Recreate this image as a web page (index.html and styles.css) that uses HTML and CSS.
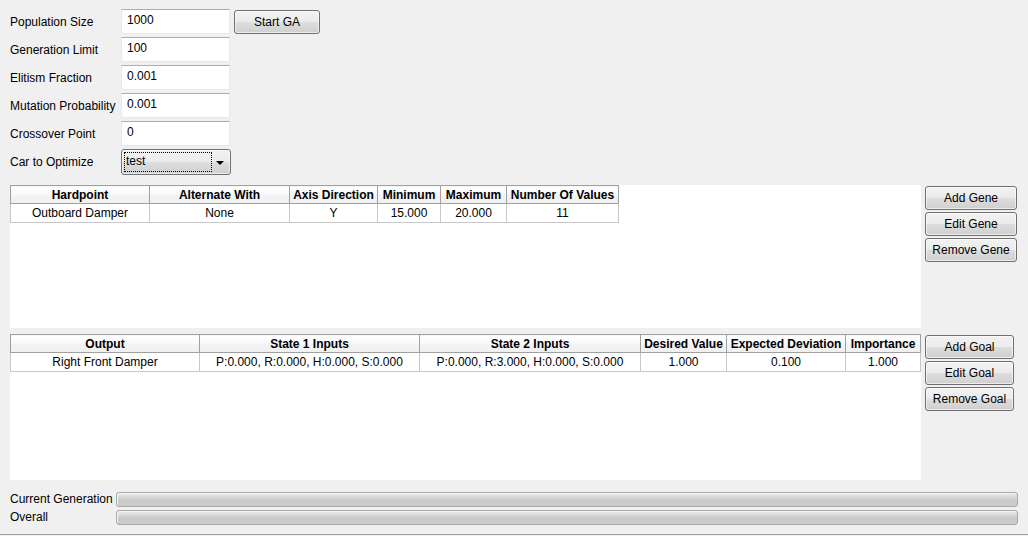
FILE: index.html
```html
<!DOCTYPE html>
<html>
<head>
<meta charset="utf-8">
<link rel="stylesheet" href="styles.css">
</head>
<body>
<div class="app">
  <div class="form">
    <div class="row">
      <span class="label">Population Size</span>
      <div class="input">1000</div>
      <button class="btn start">Start GA</button>
    </div>
    <div class="row"><span class="label">Generation Limit</span><div class="input">100</div></div>
    <div class="row"><span class="label">Elitism Fraction</span><div class="input">0.001</div></div>
    <div class="row"><span class="label">Mutation Probability</span><div class="input">0.001</div></div>
    <div class="row"><span class="label">Crossover Point</span><div class="input">0</div></div>
    <div class="row">
      <span class="label">Car to Optimize</span>
      <div class="combo">
        <div class="focus">test</div>
        <div class="arrow"></div>
      </div>
    </div>
  </div>

  <div class="section genes">
    <div class="panel">
      <table class="grid">
        <colgroup>
          <col style="width:139px"><col style="width:140px"><col style="width:88px">
          <col style="width:63px"><col style="width:66px"><col style="width:112px">
        </colgroup>
        <thead>
          <tr><th>Hardpoint</th><th>Alternate With</th><th>Axis Direction</th><th>Minimum</th><th>Maximum</th><th>Number Of Values</th></tr>
        </thead>
        <tbody>
          <tr><td>Outboard Damper</td><td>None</td><td>Y</td><td>15.000</td><td>20.000</td><td>11</td></tr>
        </tbody>
      </table>
    </div>
    <div class="buttons gene-buttons">
      <button class="btn">Add Gene</button>
      <button class="btn">Edit Gene</button>
      <button class="btn">Remove Gene</button>
    </div>
  </div>

  <div class="section goals">
    <div class="panel">
      <table class="grid">
        <colgroup>
          <col style="width:189px"><col style="width:220px"><col style="width:221px">
          <col style="width:86px"><col style="width:119px"><col style="width:75px">
        </colgroup>
        <thead>
          <tr><th>Output</th><th>State 1 Inputs</th><th>State 2 Inputs</th><th>Desired Value</th><th>Expected Deviation</th><th>Importance</th></tr>
        </thead>
        <tbody>
          <tr><td>Right Front Damper</td><td>P:0.000, R:0.000, H:0.000, S:0.000</td><td>P:0.000, R:3.000, H:0.000, S:0.000</td><td>1.000</td><td>0.100</td><td>1.000</td></tr>
        </tbody>
      </table>
    </div>
    <div class="buttons goal-buttons">
      <button class="btn">Add Goal</button>
      <button class="btn">Edit Goal</button>
      <button class="btn">Remove Goal</button>
    </div>
  </div>

  <div class="progress">
    <div class="prow"><span class="plabel">Current Generation</span><div class="bar"></div></div>
    <div class="prow"><span class="plabel">Overall</span><div class="bar"></div></div>
  </div>
  <div class="bottom-line"></div>
</div>
</body>
</html>
```

FILE: styles.css
```css
html, body {
  margin: 0;
  padding: 0;
  background: #f0f0f0;
}
body {
  width: 1028px;
  height: 536px;
  overflow: hidden;
  font-family: "Liberation Sans", Arial, sans-serif;
  font-size: 12px;
  color: #000;
}
.app {
  display: flex;
  flex-direction: column;
  padding: 9px 0 0 10px;
}
.form {
  display: flex;
  flex-direction: column;
  gap: 3px;
}
.row {
  display: flex;
  align-items: center;
  height: 25px;
}
.label {
  width: 111px;
  flex: none;
  white-space: nowrap;
  padding-top: 1px;
}
.input {
  box-sizing: border-box;
  width: 109px;
  height: 25px;
  background: #fff;
  border: 1px solid #e3e9ef;
  border-top-color: #abadb3;
  padding: 3px 0 0 5px;
  line-height: 14px;
}
.btn {
  box-sizing: border-box;
  font-family: "Liberation Sans", Arial, sans-serif;
  font-size: 12px;
  color: #000;
  border: 1px solid #707070;
  border-radius: 3px;
  background: linear-gradient(#f2f2f2 0%, #ebebeb 48%, #dddddd 52%, #cfcfcf 100%);
  box-shadow: inset 0 0 0 1px rgba(255,255,255,0.6);
  padding: 0;
  height: 24px;
  line-height: 20px;
  text-align: center;
}
.start {
  width: 86px;
  height: 24px;
  margin-left: 4px;
  align-self: flex-start;
  margin-top: 1px;
}
.combo {
  box-sizing: border-box;
  position: relative;
  width: 110px;
  height: 26px;
  border: 1px solid #707070;
  border-radius: 3px;
  background: linear-gradient(#f2f2f2 0%, #ebebeb 48%, #dddddd 52%, #cfcfcf 100%);
  box-shadow: inset 0 0 0 1px rgba(255,255,255,0.6);
  display: flex;
  align-items: stretch;
  padding: 2px;
}
.focus {
  box-sizing: border-box;
  width: 88px;
  border: 1px dotted #000;
  padding: 0 0 0 1px;
  line-height: 16px;
}
.arrow {
  position: absolute;
  right: 6px;
  top: 11px;
  width: 0;
  height: 0;
  border-left: 4px solid transparent;
  border-right: 4px solid transparent;
  border-top: 4px solid #000;
}
.section {
  display: flex;
  align-items: flex-start;
}
.genes {
  margin-top: 11px;
}
.genes .panel {
  height: 143px;
}
.goals {
  margin-top: 6px;
}
.goals .panel {
  height: 146px;
}
.panel {
  width: 911px;
  background: #fff;
  flex: none;
}
.grid {
  border-collapse: collapse;
  table-layout: fixed;
}
.grid th {
  box-sizing: border-box;
  height: 18px;
  padding: 0;
  font-weight: bold;
  text-align: center;
  white-space: nowrap;
  background: linear-gradient(#ffffff 0%, #f7f8fa 45%, #f1f2f4 55%, #f0f0f0 100%);
  border: 1px solid #a0a0a0;
  line-height: 16px;
}
.grid td {
  box-sizing: border-box;
  height: 19px;
  padding: 0;
  text-align: center;
  white-space: nowrap;
  border: 1px solid #c8c8c8;
  line-height: 17px;
}
.buttons {
  display: flex;
  flex-direction: column;
  gap: 2px;
  margin-left: 4px;
  margin-top: 1px;
}
.gene-buttons .btn {
  width: 92px;
}
.goal-buttons .btn {
  width: 89px;
}
.progress {
  margin-top: 12px;
  display: flex;
  flex-direction: column;
  gap: 4px;
}
.prow {
  display: flex;
  align-items: center;
  height: 14px;
}
.plabel {
  width: 106px;
  flex: none;
  white-space: nowrap;
}
.bar {
  box-sizing: border-box;
  width: 902px;
  height: 15px;
  border: 1px solid #a8a8a8;
  border-radius: 3px;
  background: linear-gradient(#eaeaea 0%, #dadada 30%, #c9c9c9 55%, #cdcdcd 100%);
  box-shadow: inset 1px 1px 0 #f4f4f4;
}
.bottom-line {
  margin: 10px 0 0 -10px;
  width: 1028px;
  height: 1px;
  background: #a0a0a0;
}
```
